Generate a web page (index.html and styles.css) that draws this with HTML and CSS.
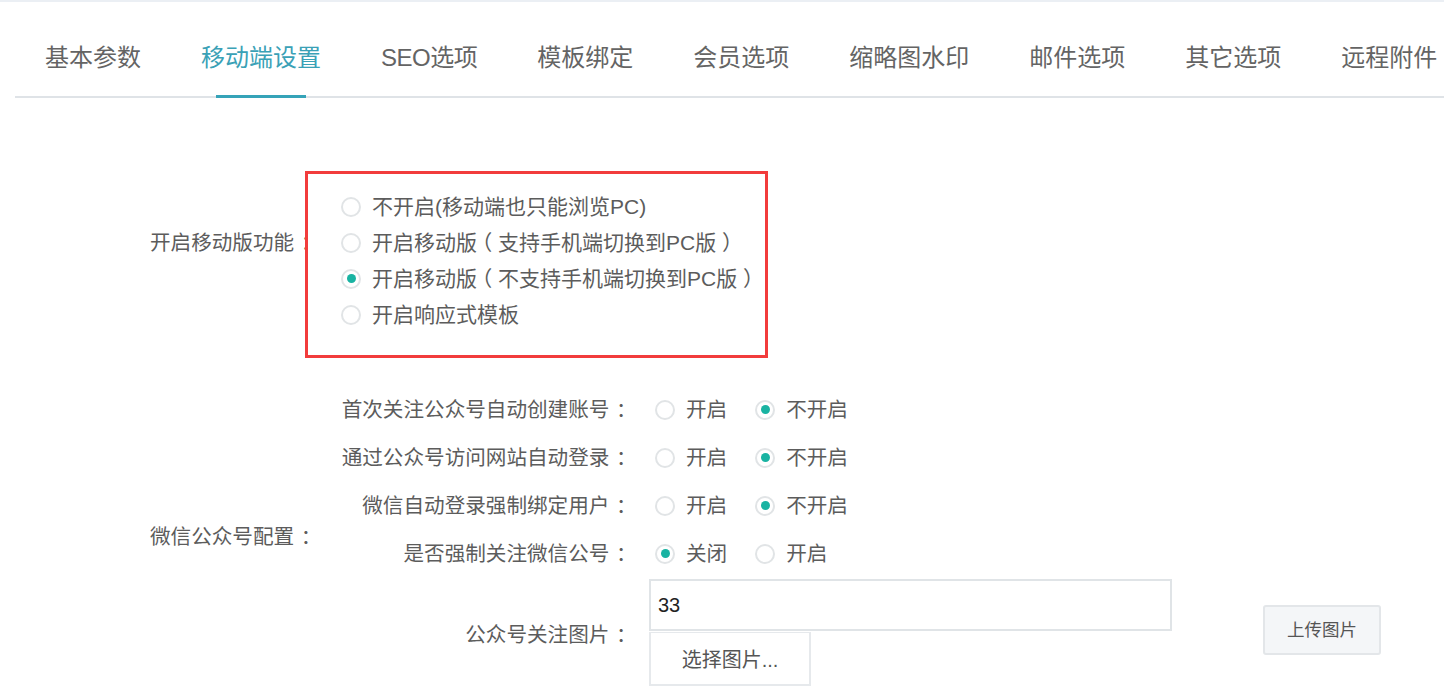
FILE: index.html
```html
<!DOCTYPE html>
<html lang="zh-CN">
<head>
<meta charset="utf-8">
<title>移动端设置</title>
<link rel="stylesheet" href="styles.css">
</head>
<body>
<div class="page">
  <ul class="tabs">
    <li class="tab">基本参数</li>
    <li class="tab active">移动端设置</li>
    <li class="tab seo">SEO选项</li>
    <li class="tab">模板绑定</li>
    <li class="tab">会员选项</li>
    <li class="tab">缩略图水印</li>
    <li class="tab">邮件选项</li>
    <li class="tab">其它选项</li>
    <li class="tab">远程附件</li>
  </ul>

  <div class="section mobile">
    <div class="main-label mobile-label">开启移动版功能<span class="colon">：</span></div>
    <div class="options-box">
      <div class="opt"><span class="radio"></span><span class="opt-text">不开启(移动端也只能浏览PC)</span></div>
      <div class="opt"><span class="radio"></span><span class="opt-text">开启移动<span class="tight">版</span><span class="loose">（</span>支持手机端切换到PC<span class="loose">版</span><span class="tight">）</span></span></div>
      <div class="opt"><span class="radio on"></span><span class="opt-text">开启移动<span class="tight">版</span><span class="loose">（</span>不支持手机端切换到PC<span class="loose">版</span><span class="tight">）</span></span></div>
      <div class="opt"><span class="radio"></span><span class="opt-text">开启响应式模板</span></div>
    </div>
  </div>

  <div class="section wechat">
    <div class="main-label wechat-label">微信公众号配置<span class="colon">：</span></div>
    <div class="rows">
      <div class="row">
        <div class="sub-label">首次关注公众号自动创建账号<span class="colon">：</span></div>
        <div class="choice"><span class="radio"></span><span class="opt-text">开启</span></div>
        <div class="choice"><span class="radio on"></span><span class="opt-text">不开启</span></div>
      </div>
      <div class="row">
        <div class="sub-label">通过公众号访问网站自动登录<span class="colon">：</span></div>
        <div class="choice"><span class="radio"></span><span class="opt-text">开启</span></div>
        <div class="choice"><span class="radio on"></span><span class="opt-text">不开启</span></div>
      </div>
      <div class="row">
        <div class="sub-label">微信自动登录强制绑定用户<span class="colon">：</span></div>
        <div class="choice"><span class="radio"></span><span class="opt-text">开启</span></div>
        <div class="choice"><span class="radio on"></span><span class="opt-text">不开启</span></div>
      </div>
      <div class="row">
        <div class="sub-label">是否强制关注微信公号<span class="colon">：</span></div>
        <div class="choice"><span class="radio on"></span><span class="opt-text">关闭</span></div>
        <div class="choice"><span class="radio"></span><span class="opt-text">开启</span></div>
      </div>
      <div class="row image-row">
        <div class="sub-label">公众号关注图片<span class="colon">：</span></div>
        <div class="field-group">
          <div class="text-input">33</div>
          <div class="pick-btn">选择图片...</div>
        </div>
        <div class="upload-btn">上传图片</div>
      </div>
    </div>
  </div>
</div>
</body>
</html>
```

FILE: styles.css
```css
* { box-sizing: border-box; }

html, body {
  margin: 0;
  padding: 0;
  background: #ffffff;
}

body {
  font-family: "Liberation Sans", "Noto Sans CJK SC", sans-serif;
  color: #5c5c5c;
  width: 1444px;
  height: 690px;
  overflow: hidden;
}

.page {
  border-top: 2px solid #ebeff4;
}

/* Tabs */
.tabs {
  list-style: none;
  margin: 0 0 0 15px;
  padding: 0;
  display: flex;
  flex-wrap: nowrap;
  border-bottom: 2px solid #dfe3e7;
  white-space: nowrap;
}

.tab {
  position: relative;
  flex: none;
  padding: 40px 30px 22px;
  font-size: 24px;
  line-height: 32px;
  color: #646464;
}

.tab.seo {
  letter-spacing: -0.5px;
}

.tab.active {
  color: #3aa1b6;
}

.tab.active::after {
  content: "";
  position: absolute;
  left: 50%;
  bottom: -2px;
  width: 90px;
  margin-left: -45px;
  height: 3px;
  background: #35a3b8;
}

/* Sections */
.section {
  display: flex;
  padding-left: 150px;
  font-size: 20.6px;
}

/* full-width punctuation drawn centred in its em box, as in the original font */
.colon {
  display: inline-block;
  width: 1em;
  padding-left: 0.32em;
  white-space: nowrap;
  text-align: left;
}

.tight {
  letter-spacing: -0.28em;
}

.loose {
  letter-spacing: 0.28em;
}

.main-label {
  white-space: nowrap;
  color: #5c5c5c;
}

.mobile {
  margin-top: 73px;
}

.mobile-label {
  width: 155px;
  padding-top: 54px;
  line-height: 36px;
}

.options-box {
  width: 463px;
  height: 187px;
  border: 3px solid #f23c3c;
  padding: 13px 0 0 33px;
  font-size: 21px;
}

.opt {
  display: flex;
  align-items: center;
  height: 36px;
}

.radio {
  flex: none;
  position: relative;
  width: 20px;
  height: 20px;
  border: 2px solid #e1e4e6;
  border-radius: 50%;
  background: #fff;
  margin-top: 3px;
}

.radio.on::after {
  content: "";
  position: absolute;
  left: 3.5px;
  top: 3.5px;
  width: 9px;
  height: 9px;
  border-radius: 50%;
  background: #19b3a2;
}

.opt-text {
  margin-left: 11px;
  white-space: nowrap;
  color: #5c5c5c;
}

/* WeChat section */
.wechat {
  margin-top: 26px;
  align-items: center;
}

.wechat-label {
  width: 180px;
}

.rows {
  display: flex;
  flex-direction: column;
}

.row {
  display: flex;
  align-items: center;
  height: 48px;
}

.sub-label {
  width: 300px;
  text-align: right;
  white-space: nowrap;
  color: #5c5c5c;
}

.choice {
  display: flex;
  align-items: center;
  margin-left: 25px;
}

.choice + .choice {
  margin-left: 28px;
}

.choice .opt-text {
  margin-left: 11px;
}

.image-row {
  height: auto;
  padding-top: 3px;
}

.field-group {
  margin-left: 19px;
  display: flex;
  flex-direction: column;
}

.text-input {
  width: 523px;
  height: 52px;
  border: 2px solid #e0e4e7;
  padding: 0 7px;
  line-height: 48px;
  font-size: 20px;
  color: #222;
  font-family: "Liberation Sans", sans-serif;
}

.pick-btn {
  width: 162px;
  height: 54px;
  margin-top: 1px;
  border: 2px solid #e6e9ec;
  border-top-width: 1px;
  text-align: center;
  line-height: 54px;
  font-size: 20px;
  color: #555;
  background: #fff;
}

.upload-btn {
  margin-left: 91px;
  margin-top: -6px;
  width: 118px;
  height: 50px;
  border: 2px solid #e3e6e9;
  border-radius: 3px;
  background: #f4f6f8;
  text-align: center;
  line-height: 46px;
  font-size: 17.5px;
  color: #555;
}
```
